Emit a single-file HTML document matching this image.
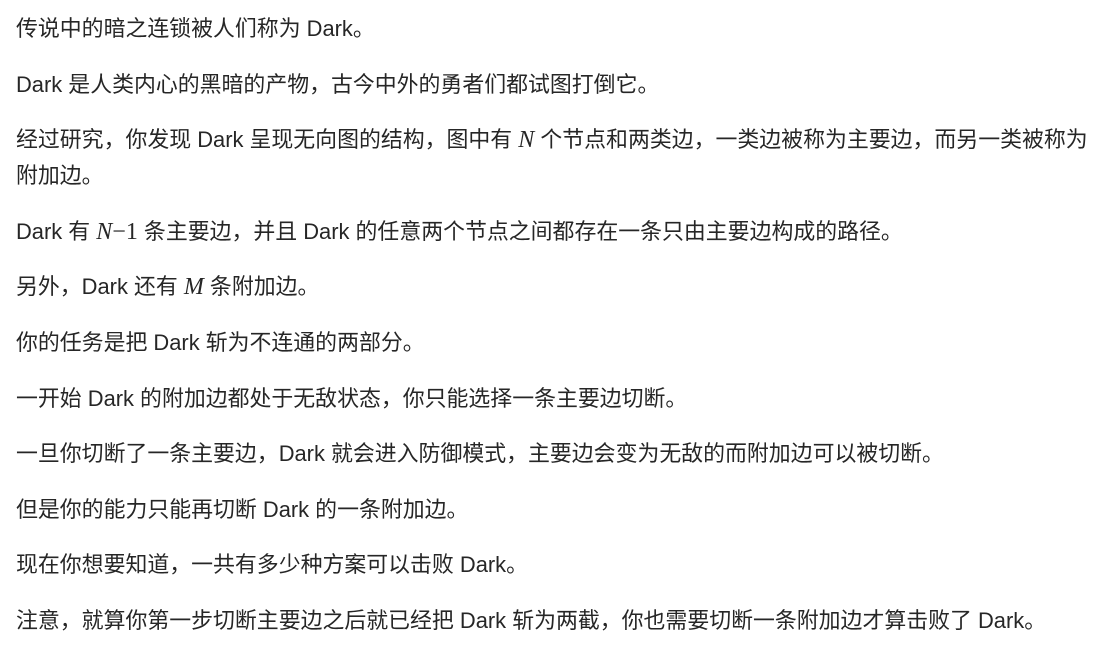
<!DOCTYPE html>
<html><head><meta charset="utf-8"><style>
body{margin:0;background:#fff;}
.w{padding:11px 16px 0 16px;font-family:"Liberation Sans","Noto Sans CJK SC",sans-serif;font-size:21.9px;color:#262626;}
p{margin:0 0 19.6px 0;line-height:36px;white-space:nowrap;}
i{font-family:"Liberation Serif",serif;font-size:24px;}
.m{font-family:"Liberation Serif",serif;font-size:24px;}
</style></head><body><div class="w">
<p>传说中的暗之连锁被人们称为 Dark。</p>
<p>Dark 是人类内心的黑暗的产物，古今中外的勇者们都试图打倒它。</p>
<p>经过研究，你发现 Dark 呈现无向图的结构，图中有 <i>N</i> 个节点和两类边，一类边被称为主要边，而另一类被称为<br>附加边。</p>
<p>Dark 有 <i>N</i><span class="m">−1</span> 条主要边，并且 Dark 的任意两个节点之间都存在一条只由主要边构成的路径。</p>
<p>另外，Dark 还有 <i>M</i> 条附加边。</p>
<p>你的任务是把 Dark 斩为不连通的两部分。</p>
<p>一开始 Dark 的附加边都处于无敌状态，你只能选择一条主要边切断。</p>
<p>一旦你切断了一条主要边，Dark 就会进入防御模式，主要边会变为无敌的而附加边可以被切断。</p>
<p>但是你的能力只能再切断 Dark 的一条附加边。</p>
<p>现在你想要知道，一共有多少种方案可以击败 Dark。</p>
<p>注意，就算你第一步切断主要边之后就已经把 Dark 斩为两截，你也需要切断一条附加边才算击败了 Dark。</p>
</div></body></html>
